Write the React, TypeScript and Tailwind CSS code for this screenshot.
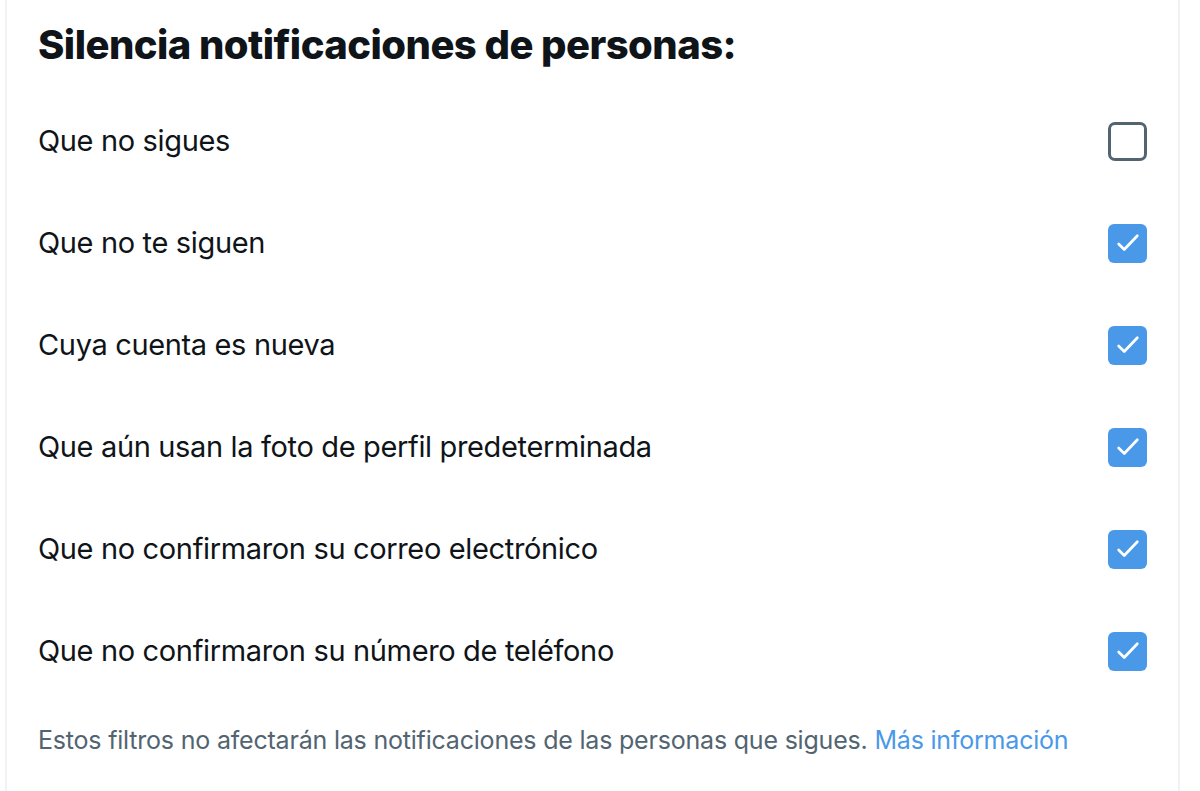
import React from "react";

const rows: { label: string; checked: boolean }[] = [
  { label: "Que no sigues", checked: false },
  { label: "Que no te siguen", checked: true },
  { label: "Cuya cuenta es nueva", checked: true },
  { label: "Que aún usan la foto de perfil predeterminada", checked: true },
  { label: "Que no confirmaron su correo electrónico", checked: true },
  { label: "Que no confirmaron su número de teléfono", checked: true },
];

function Box({ checked }: { checked: boolean }) {
  if (checked) {
    return (
      <div className="w-[39px] h-[39px] rounded-[6px] bg-[#4a99e9] flex items-center justify-center">
        <svg width="28" height="28" viewBox="0 0 24 24" fill="none">
          <path d="M4 12.8l4.8 4.8L20 5.8" stroke="white" strokeWidth="2.3" strokeLinecap="round" strokeLinejoin="round" />
        </svg>
      </div>
    );
  }
  return <div className="w-[39px] h-[39px] rounded-[7px] border-[3px] border-[#536471] bg-white" />;
}

export default function App() {
  return (
    <div className="w-[1200px] h-[791px] bg-white overflow-hidden" style={{ fontFamily: "Inter, 'Liberation Sans', sans-serif" }}>
      <div className="ml-[5px] w-[1175px] h-full border-l-2 border-r-2 border-[#eff3f4] pl-[31px] pr-[31px]">
        <div className="h-[90px] flex items-center">
          <h1 className="text-[40px] leading-[48px] font-extrabold text-[#0f1419] tracking-[-0.55px] -mt-[1px]">
            Silencia notificaciones de personas:
          </h1>
        </div>
        {rows.map((r) => (
          <div key={r.label} className="h-[102px] flex items-center justify-between">
            <span className="text-[29px] leading-[36px] tracking-[-0.35px] text-[#0f1419]">{r.label}</span>
            <Box checked={r.checked} />
          </div>
        ))}
        <div className="pt-[22px] text-[25px] leading-[32px] tracking-[-0.2px] text-[#536471]">
          Estos filtros no afectarán las notificaciones de las personas que sigues.{" "}
          <span className="text-[#4a99e9]">Más información</span>
        </div>
      </div>
    </div>
  );
}
